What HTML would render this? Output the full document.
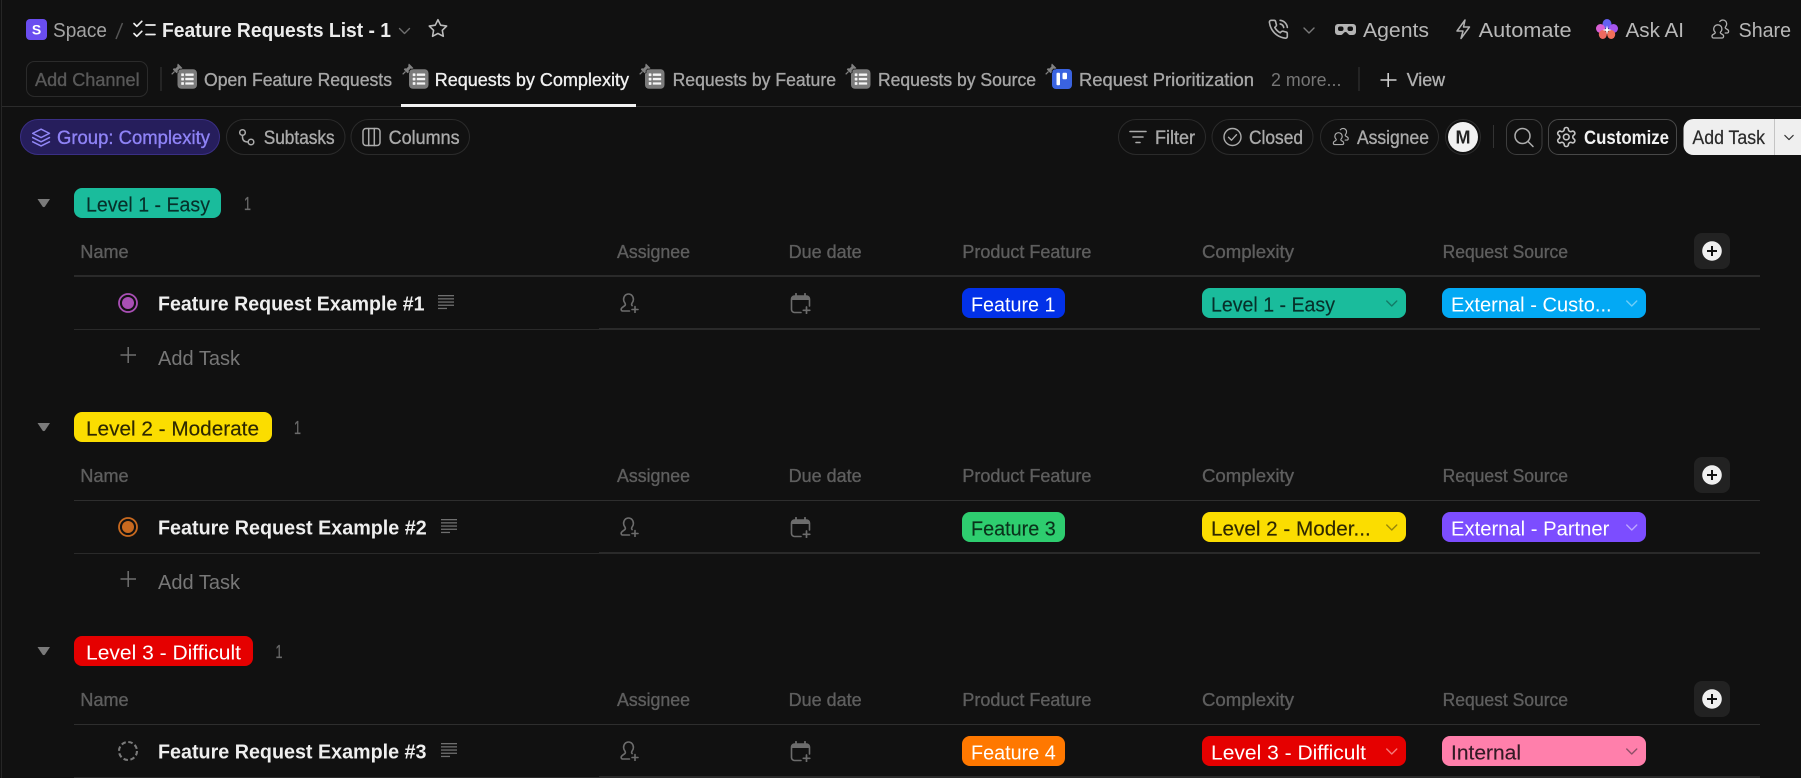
<!DOCTYPE html>
<html lang="en"><head><meta charset="utf-8"><title>Feature Requests List</title>
<style>
html,body{margin:0;padding:0;background:#111;width:1801px;height:778px;overflow:hidden}
svg{display:block}
text{font-family:"Liberation Sans",Arial,sans-serif;white-space:pre}
.m{stroke-width:.35px}
.ln{fill:none;stroke-linecap:round;stroke-linejoin:round}
</style></head><body>
<svg xmlns="http://www.w3.org/2000/svg" width="1801" height="778" viewBox="0 0 1801 778">
<defs>
<symbol id="pin" viewBox="-1 -1 15 15"><path d="M7.500.6 12.400 5.500 10.800 6.300 9.300 6 7.200 8.100 7.400 10 6 11 2 7 3 5.700 4.900 5.900 7 3.800 6.800 2.200Z" fill="#828282" stroke="#111" stroke-width="1.400" paint-order="stroke"/><path d="M3.800 9.200 .8 12.200" stroke="#828282" stroke-width="1.300"/></symbol>
<symbol id="lst" viewBox="0 0 20 20"><rect width="20" height="20" rx="4" fill="#7b7b7b"/><g fill="#f4f4f4"><rect x="3.800" y="4.200" width="2.800" height="2.800" rx=".6"/><rect x="3.800" y="8.700" width="2.800" height="2.800" rx=".6"/><rect x="3.800" y="13.200" width="2.800" height="2.800" rx=".6"/><rect x="8" y="4.400" width="8.600" height="2.400" rx=".6"/><rect x="8" y="8.900" width="8.600" height="2.400" rx=".6"/><rect x="8" y="13.400" width="8.600" height="2.400" rx=".6"/></g></symbol>
<symbol id="usr" viewBox="0 0 20 20"><path class="ln" stroke="#6c6c6c" stroke-width="1.600" d="M12.600 12.600c-.9-.9-.6-1.600 0-2.600 .8-1 1.300-2.100 1.300-3.500C13.900 3.400 12 1 9 1S4.100 3.400 4.100 6.500c0 1.400.5 2.500 1.300 3.500 .6 1 .9 1.800-.2 2.700l-2.700 2c-1.400 1.100-1 3.300.9 3.300H10M15.500 13.500v6M12.500 16.500h6"/></symbol>
<symbol id="cal" viewBox="0 0 21 21"><path class="ln" stroke="#6c6c6c" stroke-width="1.600" d="M11 19.500H4.500A3 3 0 0 1 1.500 16.500V6A3 3 0 0 1 4.500 3h12a3 3 0 0 1 3 3v7"/><path d="M1.500 7V6a3 3 0 0 1 3-3h12a3 3 0 0 1 3 3v1Z" fill="#6c6c6c"/><path d="M6 .8v3M15 .8v3" stroke="#6c6c6c" stroke-width="1.800" stroke-linecap="round"/><path class="ln" stroke="#6c6c6c" stroke-width="1.700" d="M16.500 14v6.500M13.300 17.300h6.500"/></symbol>
<symbol id="txt" viewBox="0 0 16 15"><g fill="#6f6f6f"><rect width="16" height="1.300"/><rect y="3.200" width="16" height="1.300"/><rect y="6.400" width="16" height="1.300"/><rect y="9.600" width="16" height="1.300"/><rect y="12.800" width="9" height="1.300"/></g></symbol>
<symbol id="gus" viewBox="0 0 20 20"><path class="ln" stroke="currentColor" stroke-width="1.300" d="M7.800 5.800c-2.500 0-4.100 1.900-4.100 4.100 0 1.300.5 2.300 1.300 3 .5.500.3 1.100-.2 1.500l-2 1.300c-1.300.9-1 3.300.8 3.300h8.400c1.800 0 2.100-2.400.8-3.300l-2-1.300c-.5-.4-.7-1-.2-1.500 .8-.7 1.300-1.700 1.300-3 0-2.200-1.600-4.100-4.100-4.100ZM9.800 2.500c.8-.9 1.800-1.500 3-1.500 2.400 0 3.900 1.800 3.900 3.900 0 1.300-.5 2.200-1.200 3-.5.500-.3 1.100.2 1.500l2 1.300c1.400.9 1.100 3.300-.6 3.300h-1.900"/></symbol>
<symbol id="chev" viewBox="0 0 12 7"><path class="ln" stroke="currentColor" stroke-width="1.400" d="M1 1l5 5 5-5"/></symbol>
</defs>

<rect width="1801" height="778" fill="#111"/>
<rect x="1" y="0" width="1" height="778" fill="#262626"/>

<!-- top bar -->
<rect x="26" y="19" width="21" height="21" rx="4" fill="#6a4df0"/>
<text x="36.500" y="34.500" text-anchor="middle" font-size="14" font-weight="700" fill="#fff">S</text>
<text x="53" y="37" font-size="20" fill="#a3a3a3" textLength="54" lengthAdjust="spacingAndGlyphs">Space</text>
<path d="M122.500 23 116 39" stroke="#555" stroke-width="1.500"/>
<g class="ln" stroke="#eee" stroke-width="1.700"><path d="M134 23.500l2.800 2.800 5-5M134 33.500l2.800 2.800 5-5M146 25h9M146 34.500h9"/></g>
<text x="162" y="37" font-size="20.500" font-weight="700" fill="#ececec" textLength="229" lengthAdjust="spacingAndGlyphs">Feature Requests List - 1</text>
<use href="#chev" x="398" y="27.500" width="13" height="7" color="#6e6e6e"/>
<g transform="translate(427.500 18) scale(.87)"><polygon class="ln" stroke="#bdbdbd" stroke-width="1.800" points="12 2 15.090 8.260 22 9.270 17 14.140 18.180 21.020 12 17.770 5.820 21.020 7 14.140 2 9.270 8.910 8.260"/></g>

<g transform="translate(1267.500 18.500) scale(.9)" class="ln" stroke="#b0b0b0" stroke-width="1.800"><path d="M22 16.920v3a2 2 0 0 1-2.180 2 19.790 19.790 0 0 1-8.630-3.070 19.500 19.500 0 0 1-6-6 19.790 19.790 0 0 1-3.070-8.670A2 2 0 0 1 4.110 2h3a2 2 0 0 1 2 1.720 12.840 12.840 0 0 0 .7 2.810 2 2 0 0 1-.45 2.110L8.090 9.910a16 16 0 0 0 6 6l1.270-1.270a2 2 0 0 1 2.110-.45 12.840 12.840 0 0 0 2.810.7A2 2 0 0 1 22 16.920z"/><path d="M14.050 2a9 9 0 0 1 8 7.940M14.050 6A5 5 0 0 1 18 10"/></g>
<use href="#chev" x="1302" y="27" width="14" height="7" color="#7a7a7a"/>
<path d="M1338 24h15a3 3 0 0 1 3 3v5a3 3 0 0 1-3 3h-3c-2 0-2.500-3-4.500-3s-2.500 3-4.500 3h-3a3 3 0 0 1-3-3v-5a3 3 0 0 1 3-3Z" fill="#b4b4b4"/>
<rect x="1338" y="26.500" width="5.500" height="4.500" rx="2" fill="#111"/><rect x="1347.500" y="26.500" width="5.500" height="4.500" rx="2" fill="#111"/>
<text x="1363" y="37" font-size="20" fill="#b8b8b8" textLength="66" lengthAdjust="spacingAndGlyphs">Agents</text>
<polygon class="ln" stroke="#b0b0b0" stroke-width="1.500" points="1465,20 1457,31 1463,31 1461,38.500 1469.500,27 1463.500,27"/>
<text x="1478.600" y="37" font-size="20" fill="#b8b8b8" textLength="93" lengthAdjust="spacingAndGlyphs">Automate</text>
<g>
<ellipse cx="1607" cy="24" rx="4.500" ry="5" fill="#6560f2"/>
<ellipse cx="1600.500" cy="28.500" rx="4.500" ry="4.500" fill="#d85fd4"/>
<ellipse cx="1613.500" cy="28.500" rx="4.500" ry="4.500" fill="#a455ee"/>
<ellipse cx="1602.800" cy="34.500" rx="4" ry="4.500" fill="#ee6a60"/>
<ellipse cx="1611.200" cy="34.500" rx="4" ry="4.500" fill="#f2705a"/>
<path d="M1607 25.500l1 3.500 3.500 1-3.500 1-1 3.500-1-3.500-3.500-1 3.500-1Z" fill="#fff"/>
</g>
<text x="1625.500" y="37" font-size="20" fill="#b8b8b8" textLength="58.500" lengthAdjust="spacingAndGlyphs">Ask AI</text>
<use href="#gus" x="1710" y="19" width="20" height="20" color="#b0b0b0"/>
<text x="1738.600" y="37" font-size="20" fill="#b8b8b8" textLength="52.400" lengthAdjust="spacingAndGlyphs">Share</text>

<!-- tab row -->
<rect x="26.500" y="61.500" width="121" height="35" rx="8" fill="none" stroke="#2b2b2b"/>
<text x="35" y="86" font-size="18.500" fill="#595959" textLength="104.600" lengthAdjust="spacingAndGlyphs" class="m" stroke="#595959">Add Channel</text>
<rect x="160.500" y="67" width="1" height="24" fill="#383838"/>

<use href="#lst" x="177.500" y="69" width="19.500" height="20"/><use href="#pin" x="170" y="62" width="14" height="14"/>
<text x="204" y="86" font-size="18.500" fill="#a6a6a6" stroke="#a6a6a6" class="m" textLength="188" lengthAdjust="spacingAndGlyphs">Open Feature Requests</text>
<use href="#lst" x="409" y="69" width="19.500" height="20"/><use href="#pin" x="401" y="62" width="14" height="14"/>
<text x="434.700" y="86" font-size="18.500" fill="#f0f0f0" stroke="#f0f0f0" class="m" textLength="194.300" lengthAdjust="spacingAndGlyphs">Requests by Complexity</text>
<use href="#lst" x="645" y="69" width="19.500" height="20"/><use href="#pin" x="638" y="62" width="14" height="14"/>
<text x="672.600" y="86" font-size="18.500" fill="#a6a6a6" stroke="#a6a6a6" class="m" textLength="163.400" lengthAdjust="spacingAndGlyphs">Requests by Feature</text>
<use href="#lst" x="851" y="69" width="19.500" height="20"/><use href="#pin" x="844" y="62" width="14" height="14"/>
<text x="878" y="86" font-size="18.500" fill="#a6a6a6" stroke="#a6a6a6" class="m" textLength="158" lengthAdjust="spacingAndGlyphs">Requests by Source</text>
<rect x="1052" y="69" width="20" height="20" rx="4" fill="#3a63e0"/><rect x="1056.500" y="72.700" width="3.500" height="12.500" rx="1" fill="#fff"/><rect x="1062.500" y="72.700" width="4.500" height="6.500" rx="1" fill="#fff"/>
<use href="#pin" x="1044" y="62" width="14" height="14"/>
<text x="1079" y="86" font-size="18.500" fill="#a6a6a6" stroke="#a6a6a6" class="m" textLength="175" lengthAdjust="spacingAndGlyphs">Request Prioritization</text>
<text x="1271" y="86" font-size="18.500" fill="#777" textLength="70.400" lengthAdjust="spacingAndGlyphs">2 more...</text>
<rect x="1358.500" y="67" width="1" height="24" fill="#383838"/>
<path d="M1388.200 73v14M1380.500 80h16" stroke="#d0d0d0" stroke-width="1.600"/>
<text x="1406.700" y="86" font-size="18.500" fill="#b0b0b0" stroke="#b0b0b0" class="m" textLength="38.300" lengthAdjust="spacingAndGlyphs">View</text>

<rect x="2" y="106" width="1799" height="1" fill="#2b2b2b"/>
<rect x="401" y="104" width="235" height="3" fill="#f2f2f2"/>

<!-- toolbar -->
<rect x="20.500" y="119.500" width="199" height="35" rx="17.500" fill="#261e5c" stroke="#3a2f85"/>
<g transform="translate(31 127.500) scale(.84)" class="ln" stroke="#9186f6" stroke-width="1.800"><polygon points="12 2 2 7 12 12 22 7 12 2"/><path d="M2 12l10 5 10-5M2 17l10 5 10-5"/></g>
<text x="57" y="144" font-size="19" fill="#8f83f6" stroke="#8f83f6" class="m" textLength="153" lengthAdjust="spacingAndGlyphs">Group: Complexity</text>

<rect x="226.500" y="119.500" width="118.500" height="35" rx="17.500" fill="none" stroke="#2b2b2b"/>
<g class="ln" stroke="#ababab" stroke-width="1.500"><circle cx="242.500" cy="132.500" r="2.800"/><circle cx="251" cy="142" r="2.800"/><path d="M242.500 135.500v1.500c0 3.500 2 5 5.500 5"/></g>
<text x="263.700" y="144" font-size="19" fill="#aaa" stroke="#aaa" class="m" textLength="71" lengthAdjust="spacingAndGlyphs">Subtasks</text>

<rect x="351" y="119.500" width="118.500" height="35" rx="17.500" fill="none" stroke="#2b2b2b"/>
<g class="ln" stroke="#ababab" stroke-width="1.500"><rect x="363" y="128.500" width="17" height="17" rx="3"/><path d="M368.700 128.500v17M374.300 128.500v17"/></g>
<text x="388.600" y="144" font-size="19" fill="#aaa" stroke="#aaa" class="m" textLength="71" lengthAdjust="spacingAndGlyphs">Columns</text>

<rect x="1118.500" y="119.500" width="87" height="35" rx="17.500" fill="none" stroke="#2b2b2b"/>
<path d="M1130 131.500h16M1133 137h10M1136 142.500h4" stroke="#ababab" stroke-width="1.600" stroke-linecap="round"/>
<text x="1155" y="144" font-size="19" fill="#aaa" stroke="#aaa" class="m" textLength="40" lengthAdjust="spacingAndGlyphs">Filter</text>

<rect x="1212" y="119.500" width="101" height="35" rx="17.500" fill="none" stroke="#2b2b2b"/>
<g class="ln" stroke="#ababab" stroke-width="1.400"><circle cx="1232.500" cy="137" r="8.500"/><path d="M1228.500 137.300l3 2.900 5-5.500"/></g>
<text x="1249" y="144" font-size="19" fill="#aaa" stroke="#aaa" class="m" textLength="54" lengthAdjust="spacingAndGlyphs">Closed</text>

<rect x="1320.500" y="119.500" width="118" height="35" rx="17.500" fill="none" stroke="#2b2b2b"/>
<use href="#gus" x="1331.500" y="127" width="18" height="19" color="#ababab"/>
<text x="1357" y="144" font-size="19" fill="#aaa" stroke="#aaa" class="m" textLength="72" lengthAdjust="spacingAndGlyphs">Assignee</text>

<circle cx="1463" cy="137" r="17.500" fill="#111" stroke="#2b2b2b"/>
<circle cx="1463" cy="137" r="15" fill="#f1f1f1"/>
<text x="1463" y="143.500" text-anchor="middle" font-size="18" font-weight="700" fill="#222">M</text>
<rect x="1493" y="125" width="1" height="23" fill="#333"/>

<rect x="1506.500" y="119.500" width="35.500" height="35" rx="10" fill="none" stroke="#3e3e3e"/>
<g class="ln" stroke="#aeaeae" stroke-width="1.500"><circle cx="1522.500" cy="136" r="7.500"/><path d="M1528 141.500l5 5"/></g>

<rect x="1548.500" y="119.500" width="128" height="35" rx="10" fill="none" stroke="#484848"/>
<g transform="translate(1554.900 125.600) scale(.95)" class="ln" stroke="#c4c4c4" stroke-width="1.700"><path d="M12.220 2h-.44a2 2 0 0 0-2 2v.18a2 2 0 0 1-1 1.730l-.43.25a2 2 0 0 1-2 0l-.15-.08a2 2 0 0 0-2.730.730l-.22.38a2 2 0 0 0 .73 2.730l.15.1a2 2 0 0 1 1 1.720v.51a2 2 0 0 1-1 1.740l-.15.09a2 2 0 0 0-.73 2.730l.22.38a2 2 0 0 0 2.730.730l.15-.08a2 2 0 0 1 2 0l.43.25a2 2 0 0 1 1 1.730V20a2 2 0 0 0 2 2h.44a2 2 0 0 0 2-2v-.18a2 2 0 0 1 1-1.730l.43-.25a2 2 0 0 1 2 0l.15.08a2 2 0 0 0 2.730-.73l.22-.39a2 2 0 0 0-.73-2.730l-.15-.08a2 2 0 0 1-1-1.740v-.5a2 2 0 0 1 1-1.740l.15-.09a2 2 0 0 0 .73-2.730l-.22-.38a2 2 0 0 0-2.730-.73l-.15.08a2 2 0 0 1-2 0l-.43-.25a2 2 0 0 1-1-1.730V4a2 2 0 0 0-2-2z"/><circle cx="12" cy="12" r="3"/></g>
<text x="1584" y="144" font-size="19" font-weight="700" fill="#f2f2f2" textLength="85" lengthAdjust="spacingAndGlyphs">Customize</text>

<path d="M1693.500 119H1801V155H1693.500a10 10 0 0 1-10-10V129a10 10 0 0 1 10-10Z" fill="#efefef"/>
<text x="1692.400" y="144" font-size="19" fill="#2a2a2a" stroke="#2a2a2a" stroke-width=".2" textLength="72.600" lengthAdjust="spacingAndGlyphs">Add Task</text>
<rect x="1774" y="119" width="1" height="36" fill="#c4c4c4"/>
<use href="#chev" x="1784" y="134.500" width="10" height="6" color="#333"/>

<!-- GROUP 1 -->
<path d="M37.500 199h12.500l-5 7.500a1.500 1.500 0 0 1-2.500 0Z" fill="#7a7a7a"/>
<rect x="74" y="188" width="147" height="30" rx="8" fill="#1abc9c"/>
<text x="86" y="211.700" font-size="20.500" fill="#07302a" stroke="#07302a" stroke-width=".15" textLength="124" lengthAdjust="spacingAndGlyphs">Level 1 - Easy</text>
<text x="244" y="210" font-size="18" fill="#6a6a6a" stroke="#6a6a6a" stroke-width=".3" textLength="7" lengthAdjust="spacingAndGlyphs">1</text>

<text x="80.400" y="258" font-size="18" fill="#5e5e5e" stroke="#5e5e5e" class="m" textLength="48.200" lengthAdjust="spacingAndGlyphs">Name</text>
<text x="617" y="258" font-size="18" fill="#5e5e5e" stroke="#5e5e5e" class="m" textLength="73" lengthAdjust="spacingAndGlyphs">Assignee</text>
<text x="788.600" y="258" font-size="18" fill="#5e5e5e" stroke="#5e5e5e" class="m" textLength="73" lengthAdjust="spacingAndGlyphs">Due date</text>
<text x="962.400" y="258" font-size="18" fill="#5e5e5e" stroke="#5e5e5e" class="m" textLength="129" lengthAdjust="spacingAndGlyphs">Product Feature</text>
<text x="1202" y="258" font-size="18" fill="#5e5e5e" stroke="#5e5e5e" class="m" textLength="92" lengthAdjust="spacingAndGlyphs">Complexity</text>
<text x="1442.600" y="258" font-size="18" fill="#5e5e5e" stroke="#5e5e5e" class="m" textLength="125.400" lengthAdjust="spacingAndGlyphs">Request Source</text>
<rect x="1694" y="233" width="36" height="36" rx="8" fill="#222"/>
<circle cx="1712" cy="251" r="9.800" fill="#f0f0f0"/><path d="M1712 246v10M1707 251h10" stroke="#111" stroke-width="2"/>
<rect x="74" y="275" width="1686" height="2" fill="#2a2a2a"/>

<circle cx="128" cy="303" r="9" fill="#111" stroke="#a94fb5" stroke-width="1.800"/><circle cx="128" cy="303" r="6" fill="#a94fb5"/>
<text x="158" y="310.700" font-size="20" font-weight="700" fill="#efefef" textLength="266.500" lengthAdjust="spacingAndGlyphs">Feature Request Example #1</text>
<use href="#txt" x="438" y="295" width="16" height="15"/>
<use href="#usr" x="619.500" y="293" width="20" height="20"/>
<use href="#cal" x="790" y="293" width="21" height="21"/>
<rect x="962" y="288" width="103" height="30" rx="8" fill="#0231e8"/>
<text x="971" y="311.700" font-size="20.500" fill="#fff" textLength="84.500" lengthAdjust="spacingAndGlyphs">Feature 1</text>
<rect x="1202" y="288" width="204" height="30" rx="8" fill="#1abc9c"/>
<text x="1211" y="311.700" font-size="20.500" fill="#07302a" stroke="#07302a" stroke-width=".15" textLength="124" lengthAdjust="spacingAndGlyphs">Level 1 - Easy</text>
<use href="#chev" x="1385.500" y="300" width="12.500" height="7" color="#137a66"/>
<rect x="1442" y="288" width="204" height="30" rx="8" fill="#03a9f4"/>
<text x="1451" y="311.700" font-size="20.500" fill="#fff" textLength="160.600" lengthAdjust="spacingAndGlyphs">External - Custo...</text>
<use href="#chev" x="1625.500" y="300" width="12.500" height="7" color="#6fcdf8"/>
<rect x="74" y="329" width="525" height="1" fill="#2a2a2a"/><rect x="599" y="328" width="1161" height="2" fill="#2a2a2a"/>

<path d="M128.200 347v16M120.500 355h15.500" stroke="#6f6f6f" stroke-width="1.500"/>
<text x="158" y="365" font-size="20.500" fill="#777" textLength="82" lengthAdjust="spacingAndGlyphs">Add Task</text>

<!-- GROUP 2 -->
<path d="M37.500 423h12.500l-5 7.500a1.500 1.500 0 0 1-2.500 0Z" fill="#7a7a7a"/>
<rect x="74" y="412" width="198" height="30" rx="8" fill="#fbdd00"/>
<text x="86" y="435.700" font-size="20.500" fill="#2e2800" stroke="#2e2800" stroke-width=".15" textLength="173" lengthAdjust="spacingAndGlyphs">Level 2 - Moderate</text>
<text x="294" y="434" font-size="18" fill="#6a6a6a" stroke="#6a6a6a" stroke-width=".3" textLength="7" lengthAdjust="spacingAndGlyphs">1</text>

<text x="80.400" y="482" font-size="18" fill="#5e5e5e" stroke="#5e5e5e" class="m" textLength="48.200" lengthAdjust="spacingAndGlyphs">Name</text>
<text x="617" y="482" font-size="18" fill="#5e5e5e" stroke="#5e5e5e" class="m" textLength="73" lengthAdjust="spacingAndGlyphs">Assignee</text>
<text x="788.600" y="482" font-size="18" fill="#5e5e5e" stroke="#5e5e5e" class="m" textLength="73" lengthAdjust="spacingAndGlyphs">Due date</text>
<text x="962.400" y="482" font-size="18" fill="#5e5e5e" stroke="#5e5e5e" class="m" textLength="129" lengthAdjust="spacingAndGlyphs">Product Feature</text>
<text x="1202" y="482" font-size="18" fill="#5e5e5e" stroke="#5e5e5e" class="m" textLength="92" lengthAdjust="spacingAndGlyphs">Complexity</text>
<text x="1442.600" y="482" font-size="18" fill="#5e5e5e" stroke="#5e5e5e" class="m" textLength="125.400" lengthAdjust="spacingAndGlyphs">Request Source</text>
<rect x="1694" y="457" width="36" height="36" rx="8" fill="#222"/>
<circle cx="1712" cy="475" r="9.800" fill="#f0f0f0"/><path d="M1712 470v10M1707 475h10" stroke="#111" stroke-width="2"/>
<rect x="74" y="500" width="1686" height="1" fill="#2e2e2e"/>

<circle cx="128" cy="527" r="9" fill="#111" stroke="#c8691f" stroke-width="1.800"/><circle cx="128" cy="527" r="6" fill="#c8691f"/>
<text x="158" y="534.700" font-size="20" font-weight="700" fill="#efefef" textLength="268.700" lengthAdjust="spacingAndGlyphs">Feature Request Example #2</text>
<use href="#txt" x="441" y="519" width="16" height="15"/>
<use href="#usr" x="619.500" y="517" width="20" height="20"/>
<use href="#cal" x="790" y="517" width="21" height="21"/>
<rect x="962" y="512" width="103" height="30" rx="8" fill="#2ecd6f"/>
<text x="971" y="535.700" font-size="20.500" fill="#0a321b" stroke="#0a321b" stroke-width=".15" textLength="84.700" lengthAdjust="spacingAndGlyphs">Feature 3</text>
<rect x="1202" y="512" width="204" height="30" rx="8" fill="#fbdd00"/>
<text x="1211" y="535.700" font-size="20.500" fill="#2e2800" stroke="#2e2800" stroke-width=".15" textLength="159.700" lengthAdjust="spacingAndGlyphs">Level 2 - Moder...</text>
<use href="#chev" x="1385.500" y="524" width="12.500" height="7" color="#97870a"/>
<rect x="1442" y="512" width="204" height="30" rx="8" fill="#7c4dff"/>
<text x="1451" y="535.700" font-size="20.500" fill="#fff" textLength="158.400" lengthAdjust="spacingAndGlyphs">External - Partner</text>
<use href="#chev" x="1625.500" y="524" width="12.500" height="7" color="#bda6ff"/>
<rect x="74" y="553" width="525" height="1" fill="#2a2a2a"/><rect x="599" y="552" width="1161" height="2" fill="#2a2a2a"/>

<path d="M128.200 571v16M120.500 579h15.500" stroke="#6f6f6f" stroke-width="1.500"/>
<text x="158" y="589" font-size="20.500" fill="#777" textLength="82" lengthAdjust="spacingAndGlyphs">Add Task</text>

<!-- GROUP 3 -->
<path d="M37.500 647h12.500l-5 7.500a1.500 1.500 0 0 1-2.500 0Z" fill="#7a7a7a"/>
<rect x="74" y="636" width="179" height="30" rx="8" fill="#e50000"/>
<text x="86" y="659.700" font-size="20.500" fill="#fff" textLength="155" lengthAdjust="spacingAndGlyphs">Level 3 - Difficult</text>
<text x="275.500" y="658" font-size="18" fill="#6a6a6a" stroke="#6a6a6a" stroke-width=".3" textLength="7" lengthAdjust="spacingAndGlyphs">1</text>

<text x="80.400" y="706" font-size="18" fill="#5e5e5e" stroke="#5e5e5e" class="m" textLength="48.200" lengthAdjust="spacingAndGlyphs">Name</text>
<text x="617" y="706" font-size="18" fill="#5e5e5e" stroke="#5e5e5e" class="m" textLength="73" lengthAdjust="spacingAndGlyphs">Assignee</text>
<text x="788.600" y="706" font-size="18" fill="#5e5e5e" stroke="#5e5e5e" class="m" textLength="73" lengthAdjust="spacingAndGlyphs">Due date</text>
<text x="962.400" y="706" font-size="18" fill="#5e5e5e" stroke="#5e5e5e" class="m" textLength="129" lengthAdjust="spacingAndGlyphs">Product Feature</text>
<text x="1202" y="706" font-size="18" fill="#5e5e5e" stroke="#5e5e5e" class="m" textLength="92" lengthAdjust="spacingAndGlyphs">Complexity</text>
<text x="1442.600" y="706" font-size="18" fill="#5e5e5e" stroke="#5e5e5e" class="m" textLength="125.400" lengthAdjust="spacingAndGlyphs">Request Source</text>
<rect x="1694" y="681" width="36" height="36" rx="8" fill="#222"/>
<circle cx="1712" cy="699" r="9.800" fill="#f0f0f0"/><path d="M1712 694v10M1707 699h10" stroke="#111" stroke-width="2"/>
<rect x="74" y="724" width="1686" height="1" fill="#2e2e2e"/>

<circle cx="128" cy="751" r="9" fill="none" stroke="#7a7a7a" stroke-width="2.100" stroke-dasharray="4.500 2.570"/>
<text x="158" y="758.700" font-size="20" font-weight="700" fill="#efefef" textLength="268.500" lengthAdjust="spacingAndGlyphs">Feature Request Example #3</text>
<use href="#txt" x="441" y="743" width="16" height="15"/>
<use href="#usr" x="619.500" y="741" width="20" height="20"/>
<use href="#cal" x="790" y="741" width="21" height="21"/>
<rect x="962" y="736" width="103" height="30" rx="8" fill="#ff7800"/>
<text x="971" y="759.700" font-size="20.500" fill="#fff" textLength="84.700" lengthAdjust="spacingAndGlyphs">Feature 4</text>
<rect x="1202" y="736" width="204" height="30" rx="8" fill="#e50000"/>
<text x="1211" y="759.700" font-size="20.500" fill="#fff" textLength="155" lengthAdjust="spacingAndGlyphs">Level 3 - Difficult</text>
<use href="#chev" x="1385.500" y="748" width="12.500" height="7" color="#f57a7a"/>
<rect x="1442" y="736" width="204" height="30" rx="8" fill="#ff7fab"/>
<text x="1451" y="759.700" font-size="20.500" fill="#331a25" stroke="#331a25" stroke-width=".15" textLength="70" lengthAdjust="spacingAndGlyphs">Internal</text>
<use href="#chev" x="1625.500" y="748" width="12.500" height="7" color="#8f4f68"/>
<rect x="74" y="777" width="525" height="1" fill="#2a2a2a"/><rect x="599" y="776" width="1161" height="2" fill="#2a2a2a"/>
</svg>
</body></html>
